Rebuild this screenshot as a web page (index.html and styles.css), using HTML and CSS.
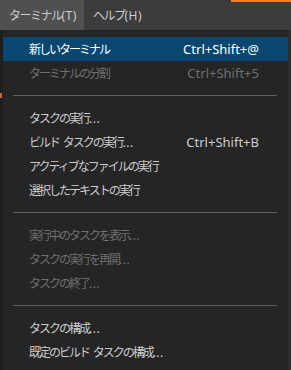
FILE: index.html
```html
<!DOCTYPE html>
<html lang="ja">
<head>
  <meta charset="UTF-8">
  <title>ターミナル メニュー</title>
  <link rel="stylesheet" href="styles.css">
</head>
<body>
  <header class="menubar">
    <div class="mb-item open">ターミナル<span class="asc">(T)</span></div>
    <div class="mb-item">ヘルプ<span class="asc">(H)</span></div>
    <div class="mb-accent"></div>
  </header>

  <div class="workbench">
    <div class="gutter"><span class="mark"></span></div>
    <ul class="menu">
      <li class="item active"><span class="label">新しいターミナル</span><span class="key">Ctrl+Shift+@</span></li>
      <li class="item disabled"><span class="label">ターミナルの分割</span><span class="key">Ctrl+Shift+5</span></li>
      <li class="sep"></li>
      <li class="item"><span class="label">タスクの実行<span class="asc">...</span></span></li>
      <li class="item"><span class="label">ビルド<span class="asc"> </span>タスクの実行<span class="asc">...</span></span><span class="key">Ctrl+Shift+B</span></li>
      <li class="item"><span class="label">アクティブなファイルの実行</span></li>
      <li class="item"><span class="label">選択したテキストの実行</span></li>
      <li class="sep"></li>
      <li class="item disabled"><span class="label">実行中のタスクを表示<span class="asc">...</span></span></li>
      <li class="item disabled"><span class="label">タスクの実行を再開<span class="asc">...</span></span></li>
      <li class="item disabled"><span class="label">タスクの終了<span class="asc">...</span></span></li>
      <li class="sep"></li>
      <li class="item"><span class="label">タスクの構成<span class="asc">...</span></span></li>
      <li class="item"><span class="label">既定のビルド<span class="asc"> </span>タスクの構成<span class="asc">...</span></span></li>
    </ul>
    <div class="edge"></div>
  </div>
</body>
</html>
```

FILE: styles.css
```css
:root {
  --bar: #3c3c3c;
  --bar-open: #505050;
  --menu: #252526;
  --editor: #1e1e1e;
  --select: #094771;
  --text: #cccccc;
  --text-dim: #6f6f6f;
  --sep: #5f5f5f;
}
html, body {
  margin: 0;
  height: 100%;
  background: var(--editor);
  font-family: 'Noto Sans', 'Noto Sans CJK JP', sans-serif;
  font-size: 12px;
  color: var(--text);
  overflow: hidden;
}
.asc { letter-spacing: 0.5px; }
.menubar {
  height: 30px;
  background: var(--bar);
  display: flex;
  align-items: stretch;
  position: relative;
}
.mb-item {
  display: flex;
  align-items: center;
  padding: 0 8px 0 9px;
  color: #cccccc;
  letter-spacing: -1.5px;
  white-space: nowrap;
}
.mb-item.open { background: var(--bar-open); padding-right: 7px; }
.mb-accent {
  position: absolute;
  top: 0; right: 0;
  width: 60px; height: 2px;
  background: #f38518;
}

.workbench { display: flex; }
.gutter { width: 3px; position: relative; }
.gutter .mark {
  position: absolute;
  left: 0; top: 63px;
  width: 2px; height: 5px;
  background: #c06a3a;
}
.menu {
  list-style: none;
  margin: 0;
  padding: 7px 0 6px;
  width: 285px;
  background: var(--menu);
  border-right: 3px solid #2d2d2e;
}
.edge { flex: 1; background: #1b1b1c; }

.item {
  display: flex;
  align-items: center;
  height: 24px;
  padding: 0 29px 0 26px;
  letter-spacing: -2px;
  white-space: pre;
}
.item .label { flex: 1; }
.item .key { letter-spacing: 0; font-size: 13px; }
.item.active { background: var(--select); color: #ffffff; }
.item.disabled { color: var(--text-dim); }
.sep {
  height: 1px;
  margin: 10px 11px 10px 10px;
  background: var(--sep);
}
```
